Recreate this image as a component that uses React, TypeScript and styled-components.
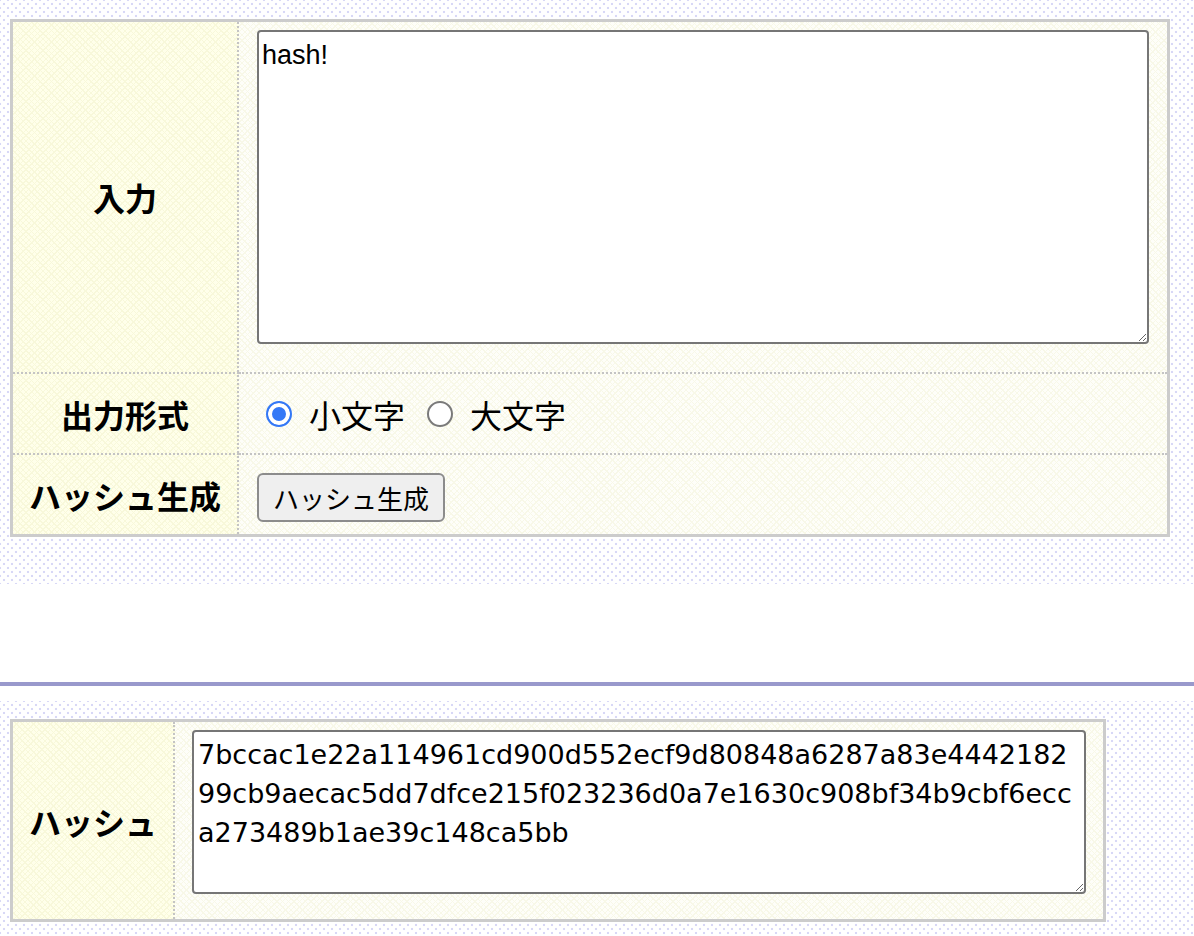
import React, { useState } from "react";
import styled, { createGlobalStyle } from "styled-components";

const GlobalStyle = createGlobalStyle`
  html, body { margin: 0; padding: 0; background: #ffffff; }
  body {
    font-family: "Noto Sans CJK JP", "Noto Sans", sans-serif;
    color: #000000;
  }
`;

const Page = styled.div`
  display: flex;
  flex-direction: column;
`;

const DottedSection = styled.section<{ $pt: number; $pb: number }>`
  background-color: #ffffff;
  background-image:
    radial-gradient(circle at center, #d8d8f6 0 1px, transparent 1.6px),
    radial-gradient(circle at center, #d8d8f6 0 1px, transparent 1.6px);
  background-size: 8px 8px;
  background-position: 0 0, 4px 4px;
  padding: ${(p) => p.$pt}px 24px ${(p) => p.$pb}px 10px;
`;

const Divider = styled.hr`
  border: none;
  height: 4px;
  margin: 98px 0 15px;
  background: #9999cc;
`;

const FormTable = styled.table<{ $full?: boolean }>`
  border: 3px solid #cccccc;
  border-collapse: separate;
  border-spacing: 0;
  width: ${(p) => (p.$full ? "100%" : "auto")};
`;

const HeadCell = styled.th<{ $sep?: boolean }>`
  padding: 0 16px;
  font-size: 32px;
  font-weight: 700;
  white-space: nowrap;
  text-align: center;
  vertical-align: middle;
  border-right: 2px dotted #c4c4c4;
  border-top: ${(p) => (p.$sep ? "2px dotted #c4c4c4" : "none")};
  background-color: #ffffea;
  background-image:
    repeating-linear-gradient(45deg, #f8f8da 0 1px, transparent 1px 4px),
    repeating-linear-gradient(-45deg, #f8f8da 0 1px, transparent 1px 4px);
`;

const DataCell = styled.td<{ $sep?: boolean }>`
  padding: 8px 16px;
  vertical-align: top;
  border-top: ${(p) => (p.$sep ? "2px dotted #c4c4c4" : "none")};
  background-color: #fefef9;
  background-image:
    repeating-linear-gradient(45deg, #f8f8e8 0 1px, transparent 1px 4px),
    repeating-linear-gradient(-45deg, #f8f8e8 0 1px, transparent 1px 4px);
`;

const TextBox = styled.textarea<{
  $w: number;
  $h: number;
  $mx: number;
  $mb: number;
  $hash?: boolean;
}>`
  display: block;
  box-sizing: border-box;
  width: ${(p) => p.$w}px;
  height: ${(p) => p.$h}px;
  margin: 0 ${(p) => p.$mx}px ${(p) => p.$mb}px ${(p) => p.$mx}px;
  border: 2px solid #767676;
  border-radius: 4px;
  padding: ${(p) => (p.$hash ? "3px 4px" : "8px 3px")};
  font-family: ${(p) =>
    p.$hash ? '"DejaVu Sans", sans-serif' : '"Liberation Sans", Arial, sans-serif'};
  font-size: 27px;
  line-height: ${(p) => (p.$hash ? "39px" : "31px")};
  color: #000000;
  background: #ffffff;
  outline: none;
  resize: both;
`;

const OptionRow = styled.div`
  display: flex;
  align-items: center;
  height: 63px;
  padding-left: 11px;
  font-size: 32px;
`;

const OptionLabel = styled.label`
  display: flex;
  align-items: center;
  gap: 17px;
  margin-right: 22px;
  cursor: pointer;
`;

const RadioDot = styled.input`
  appearance: none;
  -webkit-appearance: none;
  box-sizing: border-box;
  width: 26px;
  height: 26px;
  margin: 0;
  border-radius: 50%;
  border: 2px solid #7a7a7a;
  background: #ffffff;
  cursor: pointer;

  &:checked {
    border-color: #3478f6;
    background: #3478f6;
    box-shadow: inset 0 0 0 4px #ffffff;
  }
`;

const ButtonRow = styled.div`
  box-sizing: border-box;
  display: flex;
  align-items: flex-start;
  height: 63px;
  padding: 10px 0 0 2px;
`;

const ActionButton = styled.button`
  box-sizing: border-box;
  height: 49px;
  padding: 0 14px;
  border: 2px solid #8c8c8c;
  border-radius: 6px;
  background: #efefef;
  color: #000000;
  font-family: "Noto Sans CJK JP", sans-serif;
  font-size: 26px;
  line-height: 1;
  cursor: pointer;
`;

const HASH =
  "7bccac1e22a114961cd900d552ecf9d80848a6287a83e444218299cb9aecac5dd7dfce215f023236d0a7e1630c908bf34b9cbf6ecca273489b1ae39c148ca5bb";

export default function App() {
  const [input, setInput] = useState("hash!");
  const [caseMode, setCaseMode] = useState<"lower" | "upper">("lower");

  return (
    <>
      <GlobalStyle />
      <Page>
        <DottedSection $pt={19} $pb={47}>
          <FormTable $full>
            <tbody>
              <tr>
                <HeadCell>入力</HeadCell>
                <DataCell>
                  <TextBox
                    $w={892}
                    $h={314}
                    $mx={2}
                    $mb={20}
                    value={input}
                    onChange={(e) => setInput(e.target.value)}
                  />
                </DataCell>
              </tr>
              <tr>
                <HeadCell $sep>出力形式</HeadCell>
                <DataCell $sep>
                  <OptionRow>
                    <OptionLabel>
                      <RadioDot
                        type="radio"
                        name="case"
                        checked={caseMode === "lower"}
                        onChange={() => setCaseMode("lower")}
                      />
                      小文字
                    </OptionLabel>
                    <OptionLabel>
                      <RadioDot
                        type="radio"
                        name="case"
                        checked={caseMode === "upper"}
                        onChange={() => setCaseMode("upper")}
                      />
                      大文字
                    </OptionLabel>
                  </OptionRow>
                </DataCell>
              </tr>
              <tr>
                <HeadCell $sep>ハッシュ生成</HeadCell>
                <DataCell $sep>
                  <ButtonRow>
                    <ActionButton type="button">ハッシュ生成</ActionButton>
                  </ButtonRow>
                </DataCell>
              </tr>
            </tbody>
          </FormTable>
        </DottedSection>
        <Divider />
        <DottedSection $pt={18} $pb={30}>
          <FormTable>
            <tbody>
              <tr>
                <HeadCell>ハッシュ</HeadCell>
                <DataCell>
                  <TextBox
                    $w={894}
                    $h={164}
                    $mx={1}
                    $mb={17}
                    $hash
                    readOnly
                    value={caseMode === "upper" ? HASH.toUpperCase() : HASH}
                  />
                </DataCell>
              </tr>
            </tbody>
          </FormTable>
        </DottedSection>
      </Page>
    </>
  );
}
